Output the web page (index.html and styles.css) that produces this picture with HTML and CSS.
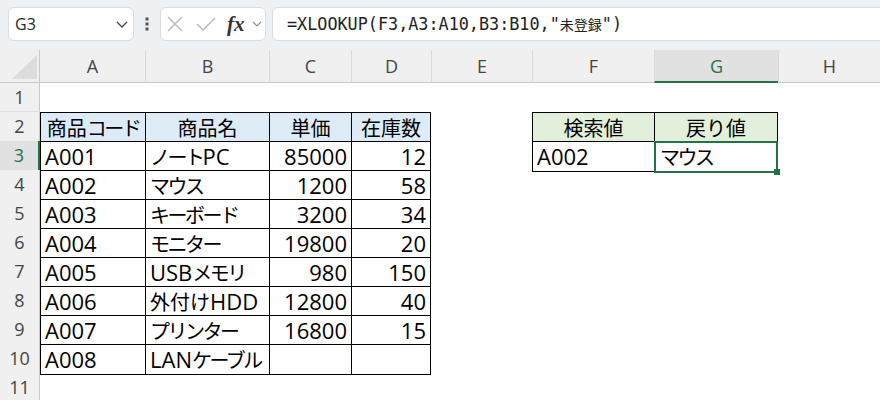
FILE: index.html
```html
<!DOCTYPE html>
<html lang="ja">
<head>
<meta charset="UTF-8" />
<meta name="viewport" content="width=device-width, initial-scale=1.0" />
<title>XLOOKUP サンプル</title>
<link rel="stylesheet" href="styles.css">
</head>
<body>

<!-- 名前ボックスと数式バー -->
<div class="toolbar">
<div class="name-box">
<span>G3</span>
<svg width="12" height="7" viewBox="0 0 12 7"><path d="M1 1 L6 6 L11 1" fill="none" stroke="#444" stroke-width="1.3"/></svg>
</div>
<svg class="grip" width="4" height="14" viewBox="0 0 4 14"><rect x="0.5" y="0.5" width="3" height="3"/><rect x="0.5" y="5.5" width="3" height="3"/><rect x="0.5" y="10.5" width="3" height="3"/></svg>
<div class="fx-box">
<svg width="16" height="16" viewBox="0 0 16 16"><path d="M1 1 L15 15 M15 1 L1 15" stroke="#b4b4b4" stroke-width="1.3"/></svg>
<svg class="ok" width="20" height="14" viewBox="0 0 20 14"><path d="M1 7 L7 13 L19 1" fill="none" stroke="#b4b4b4" stroke-width="1.3"/></svg>
<span class="fx">fx</span>
<svg class="drop" width="10" height="6" viewBox="0 0 10 6"><path d="M1 1 L5 5 L9 1" fill="none" stroke="#8a8a8a" stroke-width="1.1"/></svg>
</div>
<div class="formula">=XLOOKUP(F3,A3:A10,B3:B10,"<span class="jp">未登録</span>")</div>
</div>

<!-- シート -->
<div class="sheet">
<div class="row head-row">
<div class="corner"><div class="tri"></div></div>
<div class="col">A</div><div class="col">B</div><div class="col">C</div><div class="col">D</div>
<div class="col">E</div><div class="col">F</div><div class="col on">G</div><div class="col">H</div>
</div>

<div class="row"><div class="rh">1</div></div>

<div class="row">
<div class="rh">2</div>
<div class="c b hb"><span class="jp">商品<span class="kana">コード</span></span></div><div class="c b hb"><span class="jp">商品名</span></div><div class="c b hb"><span class="jp">単価</span></div><div class="c b e hb"><span class="jp">在庫数</span></div>
<div class="c"></div>
<div class="c b hg"><span class="jp">検索値</span></div><div class="c b e hg"><span class="jp">戻り値</span></div>
</div>

<div class="row">
<div class="rh on">3</div>
<div class="c b">A001</div><div class="c b"><span class="jp kana">ノート</span>PC</div><div class="c b r">85000</div><div class="c b e r">12</div>
<div class="c"></div>
<div class="c b z">A002</div><div class="c b e z sel"><span class="jp kana">マウス</span><div class="handle"></div></div>
</div>

<div class="row">
<div class="rh">4</div>
<div class="c b">A002</div><div class="c b"><span class="jp kana">マウス</span></div><div class="c b r">1200</div><div class="c b e r">58</div>
</div>

<div class="row">
<div class="rh">5</div>
<div class="c b">A003</div><div class="c b"><span class="jp kana">キーボード</span></div><div class="c b r">3200</div><div class="c b e r">34</div>
</div>

<div class="row">
<div class="rh">6</div>
<div class="c b">A004</div><div class="c b"><span class="jp kana">モニター</span></div><div class="c b r">19800</div><div class="c b e r">20</div>
</div>

<div class="row">
<div class="rh">7</div>
<div class="c b">A005</div><div class="c b">USB<span class="jp kana">メモリ</span></div><div class="c b r">980</div><div class="c b e r">150</div>
</div>

<div class="row">
<div class="rh">8</div>
<div class="c b">A006</div><div class="c b"><span class="jp">外付け</span>HDD</div><div class="c b r">12800</div><div class="c b e r">40</div>
</div>

<div class="row">
<div class="rh">9</div>
<div class="c b">A007</div><div class="c b"><span class="jp kana">プリンター</span></div><div class="c b r">16800</div><div class="c b e r">15</div>
</div>

<div class="row">
<div class="rh">10</div>
<div class="c b z">A008</div><div class="c b z">LAN<span class="jp kana">ケーブル</span></div><div class="c b z r"></div><div class="c b e z r"></div>
</div>

<div class="row"><div class="rh">11</div></div>
</div>

</body>
</html>
```

FILE: styles.css
```css
* { box-sizing: border-box; }

html, body {
margin: 0; padding: 0;
background: #ffffff;
overflow: hidden;
font-family: "Open Sans", "Noto Sans CJK JP", sans-serif;
}

/* 和文は少し小さめ */
.jp {
font-family: "Noto Sans CJK JP", sans-serif;
font-size: 20px;
}
/* カタカナは詰める */
.kana { letter-spacing: -2.5px; }

/* ---- 数式バー ---- */
.toolbar {
display: flex; align-items: center;
height: 50px; padding: 0 0 2px 8px;
background: #eef1f4;
}

.name-box {
width: 126px; height: 34px;
display: flex; align-items: center; justify-content: space-between;
padding: 0 5px 0 6px;
background: #fff; border: 1px solid #d9dde2; border-radius: 6px;
font-size: 16px; color: #262626;
}

.grip { margin: 0 11px; fill: #555; }

.fx-box {
width: 106px; height: 34px;
display: flex; align-items: center;
padding-left: 6px;
background: #fff; border: 1px solid #d9dde2; border-radius: 6px;
}
.fx-box .ok { margin-left: 13px; }
.fx-box .fx {
margin-left: 11px;
font-family: "Liberation Serif", serif; font-style: italic; font-weight: bold;
font-size: 21px; color: #333;
}
.fx-box .drop { margin-left: 7px; }

.formula {
flex: 1; height: 34px;
margin-left: 6px; margin-right: -12px;
display: flex; align-items: center;
padding-left: 14px;
background: #fff; border: 1px solid #d9dde2; border-radius: 6px;
font-family: "DejaVu Sans Mono", monospace; font-size: 16.8px; color: #222;
white-space: pre;
}
.formula .jp { font-size: 14px; }

/* ---- シート ---- */
.row {
display: grid;
grid-template-columns: 40px 105px 124px 82px 80px 101px 122px 124px 1fr;
height: 29px;
font-size: 22px; line-height: 28px; color: #000;
}

.head-row { height: 33px; background: #f0f0f0; }

.corner {
display: flex; justify-content: flex-end; align-items: flex-end;
padding: 0 2px 3px 0;
border-right: 1px solid #c8c8c8; border-bottom: 1px solid #c8c8c8;
}
.tri {
width: 25px; height: 24px;
background: #dcdcdc;
clip-path: polygon(100% 0, 100% 100%, 0 100%);
}

.col {
display: flex; justify-content: center; align-items: center;
font-size: 18px; color: #444;
border-left: 1px solid #dadada; border-bottom: 1px solid #c8c8c8;
}
.col:nth-child(2) { border-left: none; }
.col.on {
background: #e1e1e1; color: #217346;
border-bottom: 2px solid #217346;
}

.rh {
background: #f0f0f0;
border-right: 1px solid #c8c8c8; border-bottom: 1px solid #dedede;
text-align: center;
font-size: 18px; color: #444;
}
.rh.on {
background: #e1e1e1; color: #217346;
border-right: 2px solid #217346;
}

.c {
padding: 0 4px;
white-space: nowrap;
}
.b { border-top: 1px solid #000; border-left: 1px solid #000; }
.e { border-right: 1px solid #000; }
.z { box-shadow: 0 1px 0 #000; }
.r { text-align: right; }

.hb { background: #ddebf7; text-align: center; }
.hg { background: #e2efda; text-align: center; }

/* 選択セル */
.sel { position: relative; padding-left: 5px; }
.sel::after {
content: "";
position: absolute; left: -1px; top: -1px; right: -1px; bottom: -2px;
border: 2px solid #217346;
}
.sel .handle {
position: absolute; right: -3px; bottom: -4px;
width: 6px; height: 6px;
background: #217346;
z-index: 1;
}
```
